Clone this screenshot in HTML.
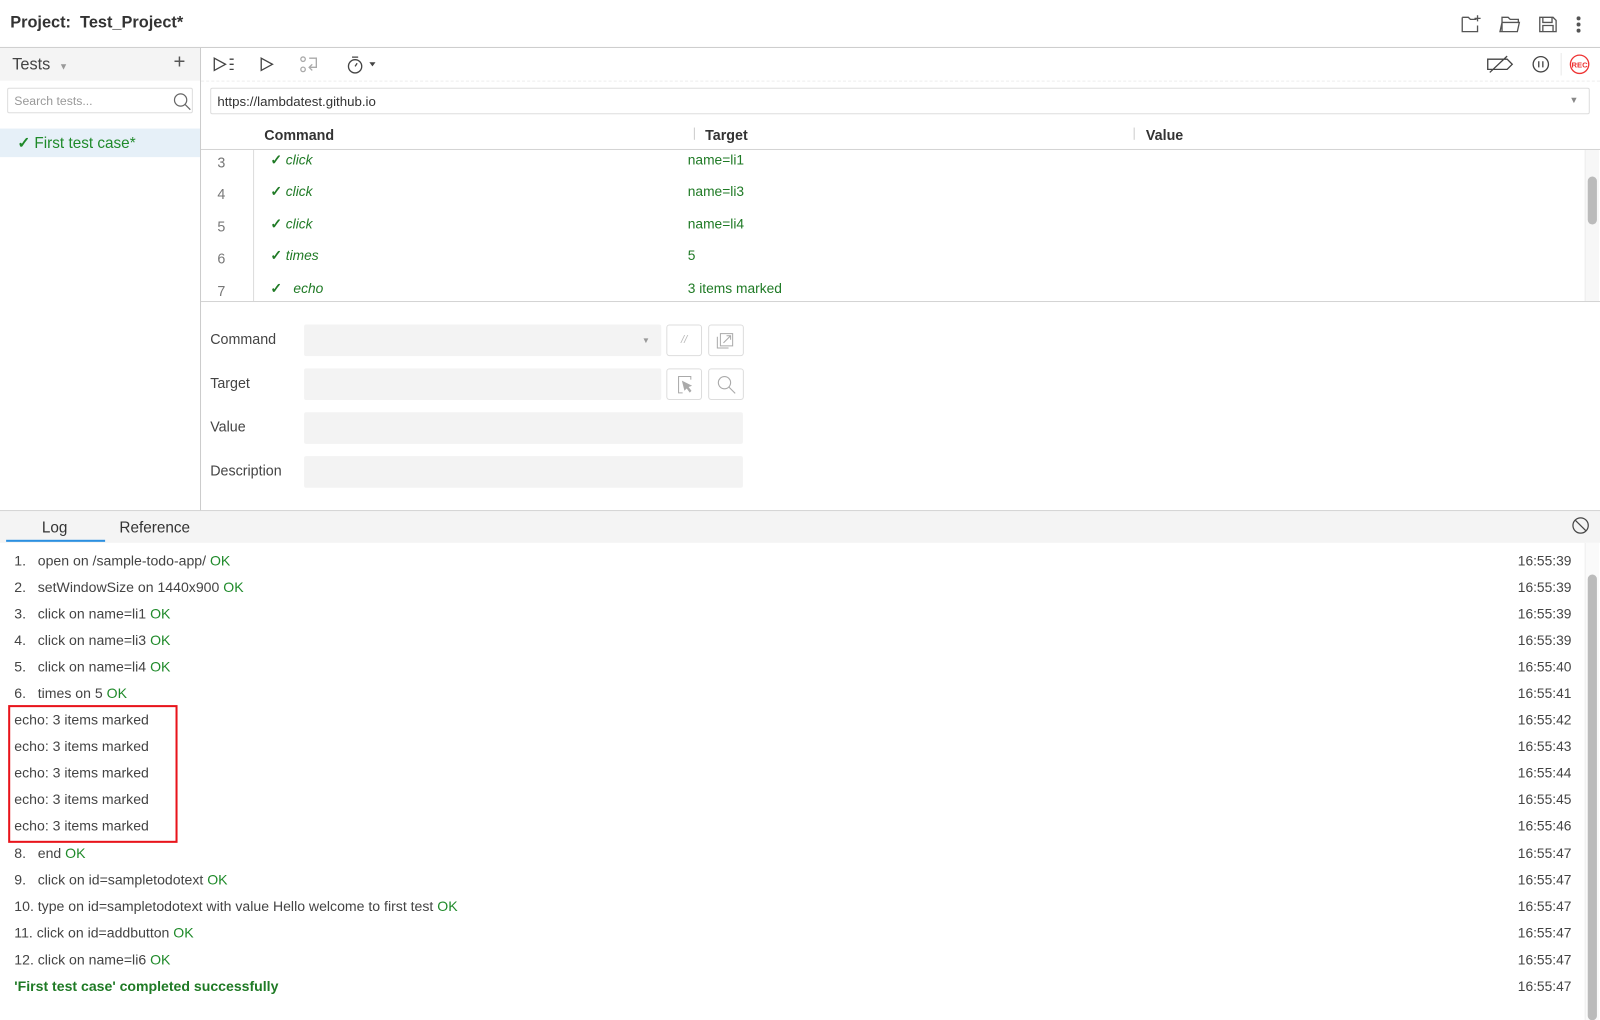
<!DOCTYPE html>
<html><head><meta charset="utf-8"><style>
*{box-sizing:border-box;margin:0;padding:0}
body{width:1600px;height:1000px;overflow:hidden;background:#fff;font-family:"Liberation Sans",Arial,sans-serif;color:#444;position:relative}
#w{position:absolute;left:0;top:0;width:1568px;height:980px;transform:scale(1.0204);transform-origin:0 0}
.a{position:absolute}
.g{color:#1f8a2a}
.log div{position:absolute;left:14px;font-size:13.8px;color:#444;white-space:nowrap}
.ts{position:absolute;right:28px;font-size:13.5px;color:#444}
.row{position:absolute;left:0;width:1357px;height:31px;font-size:13.5px}
.row .n{position:absolute;left:16px;top:9px;color:#777;font-size:14px}
.row .c{position:absolute;left:68px;top:7px;color:#1f7a25;font-style:italic}
.row .c b{font-style:normal;font-weight:bold}
.row .t{position:absolute;left:477px;top:7px;color:#1f7a25}
.lbl{position:absolute;left:206px;font-size:14px;color:#444}
.inp{position:absolute;left:298px;height:31px;background:#f3f3f3;border-radius:2px}
.btn{position:absolute;width:35px;height:31px;border:1px solid #ddd;border-radius:3px;background:#fff}
</style></head><body><div id="w">
<div class="a" style="left:10px;top:14px;font-size:16px;font-weight:bold;color:#333">Project:&nbsp; Test_Project*</div>
<svg class="a" style="left:1428px;top:12px" width="130" height="24" viewBox="0 0 130 24" fill="none" stroke="#555" stroke-width="1.3">
<path d="M5 5h6l2 2h6M5 5v14h15v-6"/><path d="M20 3v6M17 6h6"/>
<path d="M44 8V5h6l2 2h8v3M42 19l2-9h17l-2 9z M44 19V8"/>
<path d="M81 5h13l3 3v11H81z M84 5v5h9V5 M84 19v-6h10v6"/>
<circle cx="119" cy="6" r="1.3" fill="#555"/><circle cx="119" cy="12" r="1.3" fill="#555"/><circle cx="119" cy="18" r="1.3" fill="#555"/>
</svg>
<div class="a" style="left:0;top:46px;width:1568px;height:1px;background:#ccc"></div>
<div class="a" style="left:0;top:47px;width:196px;height:32px;background:#f4f4f4"></div>
<div class="a" style="left:12px;top:55px;font-size:16px;color:#444">Tests <span style="font-size:9px;color:#999;margin-left:4px">▼</span></div>
<div class="a" style="left:170px;top:50px;font-size:20px;color:#555;font-weight:300">+</div>
<div class="a" style="left:7px;top:86px;width:182px;height:25px;border:1px solid #ddd;border-radius:2px;font-size:12px;color:#999;padding:5px 0 0 6px">Search tests...</div>
<svg class="a" style="left:168px;top:89px" width="20" height="20" fill="none" stroke="#666" stroke-width="1.2"><circle cx="9" cy="9" r="6"/><path d="M13.5 13.5l5 5"/></svg>
<div class="a" style="left:0;top:126px;width:196px;height:28px;background:#e6f0f8"></div>
<div class="a g" style="left:17px;top:131px;font-size:15px"><b>✓</b> First test case*</div>
<div class="a" style="left:196px;top:47px;width:1px;height:453px;background:#ccc"></div>
<svg class="a" style="left:205px;top:52px" width="180" height="22" fill="none" stroke="#444" stroke-width="1.3">
<path d="M5 5l11 6-11 6z M20 6h4M20 11h4M20 16h4"/>
<path d="M51 5l11 6-11 6z"/>
<g stroke="#aaa"><circle cx="92" cy="6" r="2.2"/><circle cx="92" cy="16" r="2.2"/><path d="M98 5h7v9h-6M101 11l-3 3 3 3"/></g>
<circle cx="143" cy="13" r="6.5"/><path d="M140 4h6M143 13l2-3"/><path d="M157 9h6l-3 4z" fill="#444" stroke="none"/>
</svg>
<svg class="a" style="left:1455px;top:52px" width="110" height="22" fill="none" stroke="#444" stroke-width="1.3">
<path d="M3 6h19l5 5-5 5H3z M5 19L22 3"/>
<circle cx="55" cy="11" r="7.5"/><path d="M53 8v6M57 8v6"/>
<line x1="75" y1="0" x2="75" y2="22" stroke="#eee"/>
<circle cx="93" cy="11" r="9" stroke="#e33"/><text x="93" y="14" font-size="7.5" fill="#e33" stroke="none" text-anchor="middle" font-family="Liberation Sans" font-weight="bold">REC</text>
</svg>
<div class="a" style="left:197px;top:79px;width:1371px;height:1px;border-top:1px dashed #eee"></div>
<div class="a" style="left:206px;top:86px;width:1352px;height:26px;border:1px solid #ddd;border-radius:2px;font-size:13px;color:#333;padding:5px 0 0 6px">https://lambdatest.github.io</div>
<div class="a" style="left:1538px;top:93px;font-size:9px;color:#888">▼</div>
<div class="a" style="left:259px;top:124px;font-size:14px;font-weight:bold;color:#333">Command</div>
<div class="a" style="left:680px;top:125px;width:1px;height:12px;background:#ccc"></div>
<div class="a" style="left:691px;top:124px;font-size:14px;font-weight:bold;color:#333">Target</div>
<div class="a" style="left:1111px;top:125px;width:1px;height:12px;background:#ccc"></div>
<div class="a" style="left:1123px;top:124px;font-size:14px;font-weight:bold;color:#333">Value</div>
<div class="a" style="left:197px;top:146px;width:1371px;height:1px;background:#d4d4d4"></div>
<div class="a" style="left:197px;top:147px;width:1356px;height:148px;overflow:hidden">
<div class="a" style="left:51px;top:0;width:1px;height:148px;background:#ddd"></div>
<div class="row" style="top:-5px"><span class="n">3</span><span class="c"><b>✓</b> click</span><span class="t">name=li1</span></div>
<div class="row" style="top:26px"><span class="n">4</span><span class="c"><b>✓</b> click</span><span class="t">name=li3</span></div>
<div class="row" style="top:58px"><span class="n">5</span><span class="c"><b>✓</b> click</span><span class="t">name=li4</span></div>
<div class="row" style="top:89px"><span class="n">6</span><span class="c"><b>✓</b> times</span><span class="t">5</span></div>
<div class="row" style="top:121px"><span class="n">7</span><span class="c"><b>✓</b> &nbsp;&nbsp;echo</span><span class="t">3 items marked</span></div>
</div>
<div class="a" style="left:1553px;top:147px;width:14px;height:148px;background:#f7f7f7;border-left:1px solid #eee"></div>
<div class="a" style="left:1556px;top:173px;width:9px;height:47px;background:#bbb;border-radius:5px"></div>
<div class="a" style="left:197px;top:295px;width:1371px;height:1px;background:#d4d4d4"></div>
<div class="lbl" style="top:324px">Command</div>
<div class="inp" style="top:318px;width:350px"></div>
<div class="a" style="left:629px;top:329px;font-size:8px;color:#999">▼</div>
<div class="btn" style="left:653px;top:318px;color:#bbb;font-size:11px;font-style:italic;text-align:center;padding-top:8px">//</div>
<div class="btn" style="left:694px;top:318px"></div>
<svg class="a" style="left:694px;top:318px" width="35" height="31" fill="none" stroke="#aaa" stroke-width="1"><path d="M9 12v11h11M12 9h12v12H12z M15 18l7-7M18 11h4v4"/></svg>
<div class="lbl" style="top:367px">Target</div>
<div class="inp" style="top:361px;width:350px"></div>
<div class="btn" style="left:653px;top:361px"></div>
<svg class="a" style="left:653px;top:361px" width="35" height="31" fill="none" stroke="#aaa" stroke-width="1"><path d="M24 11V8H12v16h4"/><path d="M16 13l8 4-3 1 3 4-1 1-3-4-2 2z" fill="#aaa"/></svg>
<div class="btn" style="left:694px;top:361px"></div>
<svg class="a" style="left:694px;top:361px" width="35" height="31" fill="none" stroke="#aaa" stroke-width="1.1"><circle cx="16" cy="14" r="6"/><path d="M20.5 18.5l6 6"/></svg>
<div class="lbl" style="top:410px">Value</div>
<div class="inp" style="top:404px;width:430px"></div>
<div class="lbl" style="top:453px">Description</div>
<div class="inp" style="top:447px;width:430px"></div>
<div class="a" style="left:0;top:500px;width:1568px;height:1px;background:#ccc"></div>
<div class="a" style="left:0;top:501px;width:1568px;height:31px;background:#f4f4f4"></div>
<div class="a" style="left:41px;top:509px;font-size:15px;color:#333">Log</div>
<div class="a" style="left:6px;top:529px;width:97px;height:2px;background:#2b8fe0"></div>
<div class="a" style="left:117px;top:509px;font-size:15px;color:#333">Reference</div>
<svg class="a" style="left:1539px;top:505px" width="20" height="20" fill="none" stroke="#444" stroke-width="1.2"><circle cx="10" cy="10" r="7.5"/><path d="M5 5l10 10"/></svg>
<div class="a" style="left:1553px;top:532px;width:14px;height:468px;background:#fafafa;border-left:1px solid #eee"></div>
<div class="a" style="left:1556px;top:563px;width:9px;height:437px;background:#bbb;border-radius:5px"></div>
<div class="log">
<div style="top:542px">1.&nbsp;&nbsp; open on /sample-todo-app/ <span class="g">OK</span></div>
<div style="top:568px">2.&nbsp;&nbsp; setWindowSize on 1440x900 <span class="g">OK</span></div>
<div style="top:594px">3.&nbsp;&nbsp; click on name=li1 <span class="g">OK</span></div>
<div style="top:620px">4.&nbsp;&nbsp; click on name=li3 <span class="g">OK</span></div>
<div style="top:646px">5.&nbsp;&nbsp; click on name=li4 <span class="g">OK</span></div>
<div style="top:672px">6.&nbsp;&nbsp; times on 5 <span class="g">OK</span></div>
<div style="top:698px">echo: 3 items marked</div>
<div style="top:724px">echo: 3 items marked</div>
<div style="top:750px">echo: 3 items marked</div>
<div style="top:776px">echo: 3 items marked</div>
<div style="top:802px">echo: 3 items marked</div>
<div style="top:829px">8.&nbsp;&nbsp; end <span class="g">OK</span></div>
<div style="top:855px">9.&nbsp;&nbsp; click on id=sampletodotext <span class="g">OK</span></div>
<div style="top:881px">10. type on id=sampletodotext with value Hello welcome to first test <span class="g">OK</span></div>
<div style="top:907px">11. click on id=addbutton <span class="g">OK</span></div>
<div style="top:933px">12. click on name=li6 <span class="g">OK</span></div>
<div style="top:959px;font-weight:bold;color:#1f7a25">'First test case' completed successfully</div>
</div>
<div class="ts" style="top:542px">16:55:39</div>
<div class="ts" style="top:568px">16:55:39</div>
<div class="ts" style="top:594px">16:55:39</div>
<div class="ts" style="top:620px">16:55:39</div>
<div class="ts" style="top:646px">16:55:40</div>
<div class="ts" style="top:672px">16:55:41</div>
<div class="ts" style="top:698px">16:55:42</div>
<div class="ts" style="top:724px">16:55:43</div>
<div class="ts" style="top:750px">16:55:44</div>
<div class="ts" style="top:776px">16:55:45</div>
<div class="ts" style="top:802px">16:55:46</div>
<div class="ts" style="top:829px">16:55:47</div>
<div class="ts" style="top:855px">16:55:47</div>
<div class="ts" style="top:881px">16:55:47</div>
<div class="ts" style="top:907px">16:55:47</div>
<div class="ts" style="top:933px">16:55:47</div>
<div class="ts" style="top:959px">16:55:47</div>
<div class="a" style="left:8px;top:691px;width:166px;height:135px;border:2px solid #e8141b"></div>
</div></body></html>
